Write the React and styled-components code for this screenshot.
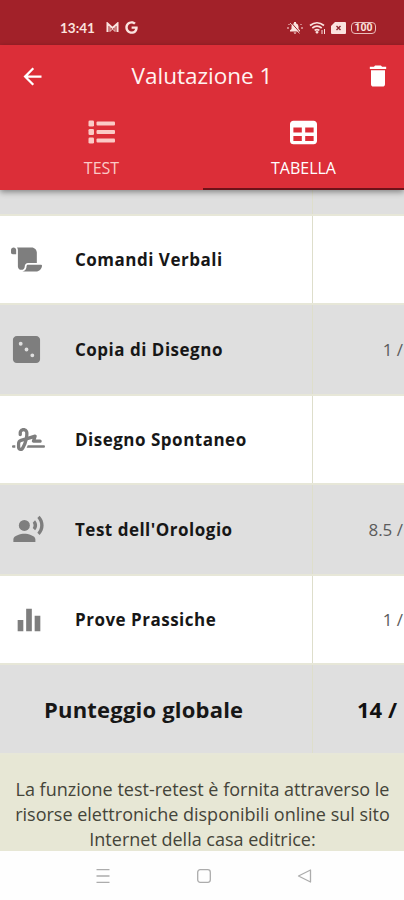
import React from "react";
import styled, { createGlobalStyle } from "styled-components";
import { FaGoogle } from "react-icons/fa";
import {
  FaDiceThree,
  FaScroll,
  FaSignature,
  FaTable,
} from "react-icons/fa6";
import {
  MdArrowBack,
  MdDelete,
  MdEqualizer,
  MdRecordVoiceOver,
} from "react-icons/md";

const GlobalStyle = createGlobalStyle`
  * {
    box-sizing: border-box;
  }
  body {
    margin: 0;
    background: #fefefe;
    font-family: "Open Sans", "Noto Sans", sans-serif;
  }
`;

const Screen = styled.div`
  width: 404px;
  height: 900px;
  display: flex;
  flex-direction: column;
  overflow: hidden;
`;

const StatusBar = styled.div`
  height: 45px;
  flex: none;
  display: flex;
  justify-content: space-between;
  align-items: center;
  padding: 10px 28px 0 60px;
  background: #a22129;
  color: #fbe3df;
`;

const StatusGroup = styled.div`
  display: flex;
  align-items: center;
  gap: ${(props) => props.$gap}px;
`;

const Clock = styled.span`
  width: 35px;
  margin-right: 4px;
  font-family: Lato, sans-serif;
  font-size: 13.5px;
  font-weight: 700;
  line-height: 14px;
  white-space: nowrap;
`;

const Battery = styled.span`
  display: flex;
  align-items: center;
  justify-content: center;
  width: 25px;
  height: 12px;
  border: 1px solid #e9bdbb;
  border-radius: 4px;
  font-family: Roboto, sans-serif;
  font-size: 10.5px;
  font-weight: 700;
  line-height: 10px;
`;

const Header = styled.header`
  position: relative;
  z-index: 1;
  flex: none;
  height: 145px;
  background: #dc2e38;
  color: #fff;
  box-shadow: 0 2px 6px rgba(0, 0, 0, 0.42);
`;

const Toolbar = styled.div`
  height: 62px;
  display: grid;
  grid-template-columns: 64px 1fr 52px;
  align-items: center;
`;

const IconButton = styled.button`
  display: flex;
  justify-content: center;
  padding: 0;
  border: 0;
  background: none;
  color: inherit;
  font-size: ${(props) => props.$size}px;
`;

const Title = styled.h1`
  margin: 0;
  padding-right: 12px;
  text-align: center;
  font-size: 22.5px;
  font-weight: 400;
  line-height: 30px;
  color: #fff3f1;
`;

const Tabs = styled.div`
  display: grid;
  grid-template-columns: 203px 1fr;
  height: 83px;
`;

const Tab = styled.div`
  display: flex;
  flex-direction: column;
  align-items: center;
  padding-top: 12px;
  border-bottom: 2px solid ${(props) => (props.$active ? "#6e1219" : "#dc2e38")};
  color: ${(props) => (props.$active ? "#fff" : "#fbcac6")};
  font-size: 16px;
  line-height: 22px;

  svg {
    width: 27px;
    height: 27px;
    margin-bottom: 11px;
  }
`;

const TableBody = styled.main`
  flex: none;
`;

const Row = styled.div`
  display: grid;
  grid-template-columns: 313px 1fr;
  height: ${(props) => props.$height}px;
  background: ${(props) => (props.$shaded ? "#dfdfdf" : "#fff")};
  border-bottom: 2px solid #e7e7d8;
`;

const NameCell = styled.div`
  display: flex;
  align-items: center;
  border-right: 1px solid #dedecb;
  font-size: 17px;
  font-weight: 700;
  letter-spacing: 0.5px;
  color: #171717;
`;

const RowIcon = styled.span`
  display: flex;
  align-items: center;
  width: ${(props) => 75 - props.$left}px;
  margin-left: ${(props) => props.$left}px;
  color: #7e7e7e;
  font-size: ${(props) => props.$size}px;
`;

const ScoreCell = styled.div`
  display: flex;
  align-items: center;
  justify-content: flex-end;
  padding-right: 1px;
  font-size: 17px;
  color: #5b5b5b;
  white-space: pre;
`;

const TotalName = styled(NameCell)`
  padding-left: 44px;
  font-size: 22px;
  letter-spacing: 0.2px;
`;

const TotalScore = styled(ScoreCell)`
  padding-right: 7px;
  font-size: 22px;
  font-weight: 700;
  color: #111;
`;

const Note = styled.p`
  flex: none;
  height: 96px;
  margin: 0;
  padding: 22px 0 0 1px;
  background: #e7e7d5;
  text-align: center;
  font-size: 18px;
  line-height: 25px;
  color: #444439;
  white-space: nowrap;
`;

const NavBar = styled.nav`
  flex: 1;
  display: flex;
  justify-content: space-between;
  padding: 17px 91px 0 95px;
  background: #fefefe;

  svg {
    width: 16px;
    height: 16px;
    fill: none;
    stroke: #acacac;
    stroke-width: 1.3;
  }
`;

const rows = [
  { name: "Comandi Verbali", icon: FaScroll, size: 31, left: 11, score: "" },
  { name: "Copia di Disegno", icon: FaDiceThree, size: 31, left: 11, score: "1 /" },
  { name: "Disegno Spontaneo", icon: FaSignature, size: 33, left: 12, score: "" },
  { name: "Test dell'Orologio", icon: MdRecordVoiceOver, size: 33, left: 12, score: "8.5 /" },
  { name: "Prove Prassiche", icon: MdEqualizer, size: 34, left: 12, score: "1 /" },
];

const MutedBell = () => (
  <svg width="18" height="14" viewBox="0 0 18 14" fill="none" stroke="currentColor">
    <path d="M4 10.5V9.3L5.5 8V5.5Q5.5 3 8 2.3V1h2v1.3q2.5.7 2.5 3.2V8L14 9.3v1.2ZM7.5 11.5h3Q9 14 7.5 11.5Z" fill="currentColor" stroke="none" />
    <path d="M1 7h2M15 7h2M2.5 3l1 1M15.5 3l-1 1" />
    <path d="m6 2.5 7 8" stroke="#a22129" />
    <path d="m4 2 9.5 10.5" strokeWidth=".8" />
  </svg>
);

const Wifi = () => (
  <svg width="17" height="14" viewBox="0 0 17 14" fill="none" stroke="currentColor" strokeWidth="1.7">
    <path d="M1 4.5Q8 -1 15 4.5M3.3 7Q8 3.3 12.7 7M5.6 9.4Q8 7.7 10.4 9.4" />
    <path d="m6.2 11 1.8-1.2L9.8 11 8 13Z" fill="currentColor" stroke="none" />
    <path d="M13 9v4M15.5 8v5" strokeWidth="1" />
  </svg>
);

const SimCard = () => (
  <svg width="15" height="12" viewBox="0 0 15 12">
    <path d="M4 0h10q1 0 1 1v10q0 1-1 1H1q-1 0-1-1V4Z" fill="currentColor" />
    <path d="m5.5 4 4 4m0-4-4 4" stroke="#8e2730" strokeWidth="1.4" />
  </svg>
);

const MailIcon = () => (
  <svg width="13" height="11" viewBox="0 0 13 11" fill="none" stroke="currentColor">
    <path d="M1.5 10V1.5l5 4.5 5-4.5V10" strokeWidth="2" />
    <path d="M4 9.5V5M9 9.5V5M4 9.5 6.5 7 9 9.5" strokeWidth=".9" />
  </svg>
);

const ListIcon = () => (
  <svg viewBox="0 0 27 27" fill="currentColor">
    {[1.5, 10, 18.5].map((y) => (
      <g key={y}>
        <rect x="0.5" y={y} width="5.5" height="6" rx="1.3" />
        <rect x="8.5" y={y + 1} width="18.5" height="4" rx="1" />
      </g>
    ))}
  </svg>
);

export default function App() {
  return (
    <Screen>
      <GlobalStyle />
      <StatusBar>
        <StatusGroup $gap={6.5}>
          <Clock>13:41</Clock>
          <MailIcon />
          <FaGoogle size={13} />
        </StatusGroup>
        <StatusGroup $gap={5}>
          <MutedBell />
          <Wifi />
          <SimCard />
          <Battery>100</Battery>
        </StatusGroup>
      </StatusBar>
      <Header>
        <Toolbar>
          <IconButton $size={27}>
            <MdArrowBack />
          </IconButton>
          <Title>Valutazione 1</Title>
          <IconButton $size={28}>
            <MdDelete />
          </IconButton>
        </Toolbar>
        <Tabs>
          <Tab>
            <ListIcon />
            TEST
          </Tab>
          <Tab $active>
            <FaTable />
            TABELLA
          </Tab>
        </Tabs>
      </Header>
      <TableBody>
        <Row $shaded $height={26}>
          <NameCell />
        </Row>
        {rows.map((row, index) => {
          const Icon = row.icon;
          const shaded = index % 2 === 1;
          return (
            <Row key={row.name} $shaded={shaded} $height={shaded ? 91 : 89}>
              <NameCell>
                <RowIcon $size={row.size} $left={row.left}>
                  <Icon />
                </RowIcon>
                {row.name}
              </NameCell>
              <ScoreCell>{row.score}</ScoreCell>
            </Row>
          );
        })}
        <Row $shaded $height={90}>
          <TotalName>Punteggio globale</TotalName>
          <TotalScore>14 /</TotalScore>
        </Row>
      </TableBody>
      <Note>
        La funzione test-retest è fornita attraverso le
        <br />
        risorse elettroniche disponibili online sul sito
        <br />
        Internet della casa editrice:
      </Note>
      <NavBar>
        <svg viewBox="0 0 16 16">
          <path d="M1.5 1.7h13M1.5 8h13M1.5 14.3h13" />
        </svg>
        <svg viewBox="0 0 16 16">
          <rect x="1.7" y="1.7" width="12.6" height="12.6" rx="2.5" />
        </svg>
        <svg viewBox="0 0 16 16">
          <path d="M13.5 2v12L1.5 8Z" strokeLinejoin="round" />
        </svg>
      </NavBar>
    </Screen>
  );
}
